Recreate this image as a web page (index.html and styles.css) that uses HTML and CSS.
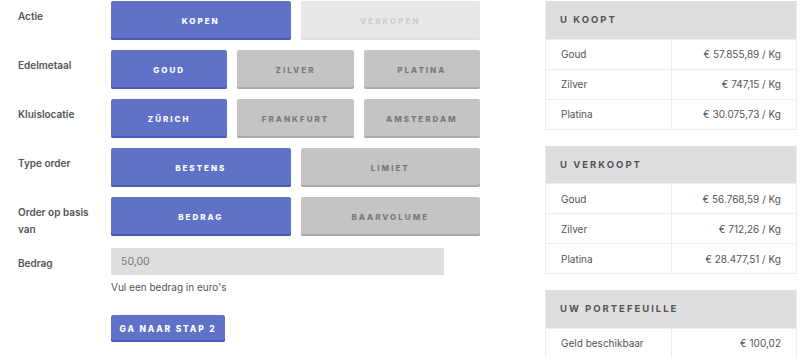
FILE: index.html
```html
<!DOCTYPE html>
<html lang="nl">
<head>
    <meta charset="UTF-8">
    <meta name="viewport" content="width=device-width, initial-scale=1.0">
    <title>Bestellen</title>
    <link rel="stylesheet" href="styles.css">
</head>
<body>
    <div class="page">
        <form class="order-form" id="orderForm">
            <div class="form-row">
                <label>Actie</label>
                <div class="choices two">
                    <button type="button" class="choice active">Kopen</button>
                    <button type="button" class="choice disabled">Verkopen</button>
                </div>
            </div>

            <div class="form-row">
                <label>Edelmetaal</label>
                <div class="choices three">
                    <button type="button" class="choice active">Goud</button>
                    <button type="button" class="choice">Zilver</button>
                    <button type="button" class="choice">Platina</button>
                </div>
            </div>

            <div class="form-row">
                <label>Kluislocatie</label>
                <div class="choices three">
                    <button type="button" class="choice active">Zürich</button>
                    <button type="button" class="choice">Frankfurt</button>
                    <button type="button" class="choice">Amsterdam</button>
                </div>
            </div>

            <div class="form-row">
                <label>Type order</label>
                <div class="choices two">
                    <button type="button" class="choice active">Bestens</button>
                    <button type="button" class="choice">Limiet</button>
                </div>
            </div>

            <div class="form-row">
                <label>Order op basis van</label>
                <div class="choices two">
                    <button type="button" class="choice active">Bedrag</button>
                    <button type="button" class="choice">Baarvolume</button>
                </div>
            </div>

            <div class="form-row">
                <label for="amount">Bedrag</label>
                <div class="field">
                    <input type="text" id="amount" value="50,00">
                    <p class="help">Vul een bedrag in euro's</p>
                    <button type="submit" class="next-btn">Ga naar stap 2</button>
                </div>
            </div>
        </form>

        <aside class="sidebar">
            <table class="price-table">
                <thead>
                    <tr><th colspan="2">U koopt</th></tr>
                </thead>
                <tbody>
                    <tr><td>Goud</td><td>€ 57.855,89 / Kg</td></tr>
                    <tr><td>Zilver</td><td>€ 747,15 / Kg</td></tr>
                    <tr><td>Platina</td><td>€ 30.075,73 / Kg</td></tr>
                </tbody>
            </table>

            <table class="price-table">
                <thead>
                    <tr><th colspan="2">U verkoopt</th></tr>
                </thead>
                <tbody>
                    <tr><td>Goud</td><td>€ 56.768,59 / Kg</td></tr>
                    <tr><td>Zilver</td><td>€ 712,26 / Kg</td></tr>
                    <tr><td>Platina</td><td>€ 28.477,51 / Kg</td></tr>
                </tbody>
            </table>

            <table class="price-table">
                <thead>
                    <tr><th colspan="2">Uw portefeuille</th></tr>
                </thead>
                <tbody>
                    <tr><td>Geld beschikbaar</td><td>€ 100,02</td></tr>
                </tbody>
            </table>
        </aside>
    </div>
</body>
</html>
```

FILE: styles.css
```css
* {
    margin: 0;
    padding: 0;
    box-sizing: border-box;
    font-family: 'Inter', 'Liberation Sans', sans-serif;
}

body {
    background-color: #fff;
    color: #555;
    padding-top: 1px;
}

.page {
    display: flex;
    align-items: flex-start;
}

.order-form {
    width: 480px;
    padding-left: 18px;
}

.form-row {
    display: grid;
    grid-template-columns: 93px 1fr;
    margin-bottom: 10px;
}

.form-row label {
    font-size: 10px;
    font-weight: 600;
    line-height: 17px;
    padding-top: 7px;
    padding-right: 18px;
    color: #555;
}

.choices {
    display: grid;
    gap: 10px;
}

.choices.two {
    grid-template-columns: repeat(2, 1fr);
}

.choices.three {
    grid-template-columns: repeat(3, 1fr);
}

.choice {
    height: 39px;
    border: none;
    border-radius: 2px;
    background-color: #c4c4c4;
    box-shadow: inset 0 -2px 0 #a9a9a9;
    color: #7a7a7a;
    font-size: 8px;
    font-weight: 800;
    letter-spacing: 2px;
    text-transform: uppercase;
    cursor: pointer;
}

.choice.active {
    background-color: #5f72c8;
    box-shadow: inset 0 -2px 0 #4a5bb8;
    color: #fff;
}

.choice.disabled {
    background-color: #e8e8e8;
    box-shadow: inset 0 -2px 0 #e0e0e0;
    color: #cdcdcd;
    cursor: default;
}

.field input {
    display: block;
    width: 333px;
    height: 27px;
    border: none;
    background-color: #dedede;
    padding: 0 10px;
    font-size: 10.5px;
    color: #777;
    outline: none;
}

.help {
    font-size: 10px;
    line-height: 17px;
    margin-top: 4px;
    color: #555;
}

.next-btn {
    margin-top: 19px;
    width: 114px;
    height: 27px;
    border: none;
    border-radius: 2px;
    background-color: #5f72c8;
    box-shadow: inset 0 -2px 0 #4a5bb8;
    color: #fff;
    font-size: 8.5px;
    font-weight: 800;
    letter-spacing: 1.8px;
    text-transform: uppercase;
    cursor: pointer;
}

.sidebar {
    width: 252px;
    margin-left: 65px;
}

.price-table {
    width: 100%;
    border-collapse: collapse;
    table-layout: fixed;
    margin-bottom: 16px;
    border: 1px solid #eee;
    border-top: none;
}

.price-table th {
    background-color: #dedede;
    height: 38px;
    padding-left: 14px;
    text-align: left;
    font-size: 9.5px;
    font-weight: 700;
    letter-spacing: 2px;
    text-transform: uppercase;
    color: #555;
}

.price-table td {
    height: 30px;
    padding: 0 15px;
    font-size: 10px;
    color: #555;
    border-top: 1px solid #eee;
}

.price-table td + td {
    text-align: right;
    border-left: 1px solid #eee;
}
```
